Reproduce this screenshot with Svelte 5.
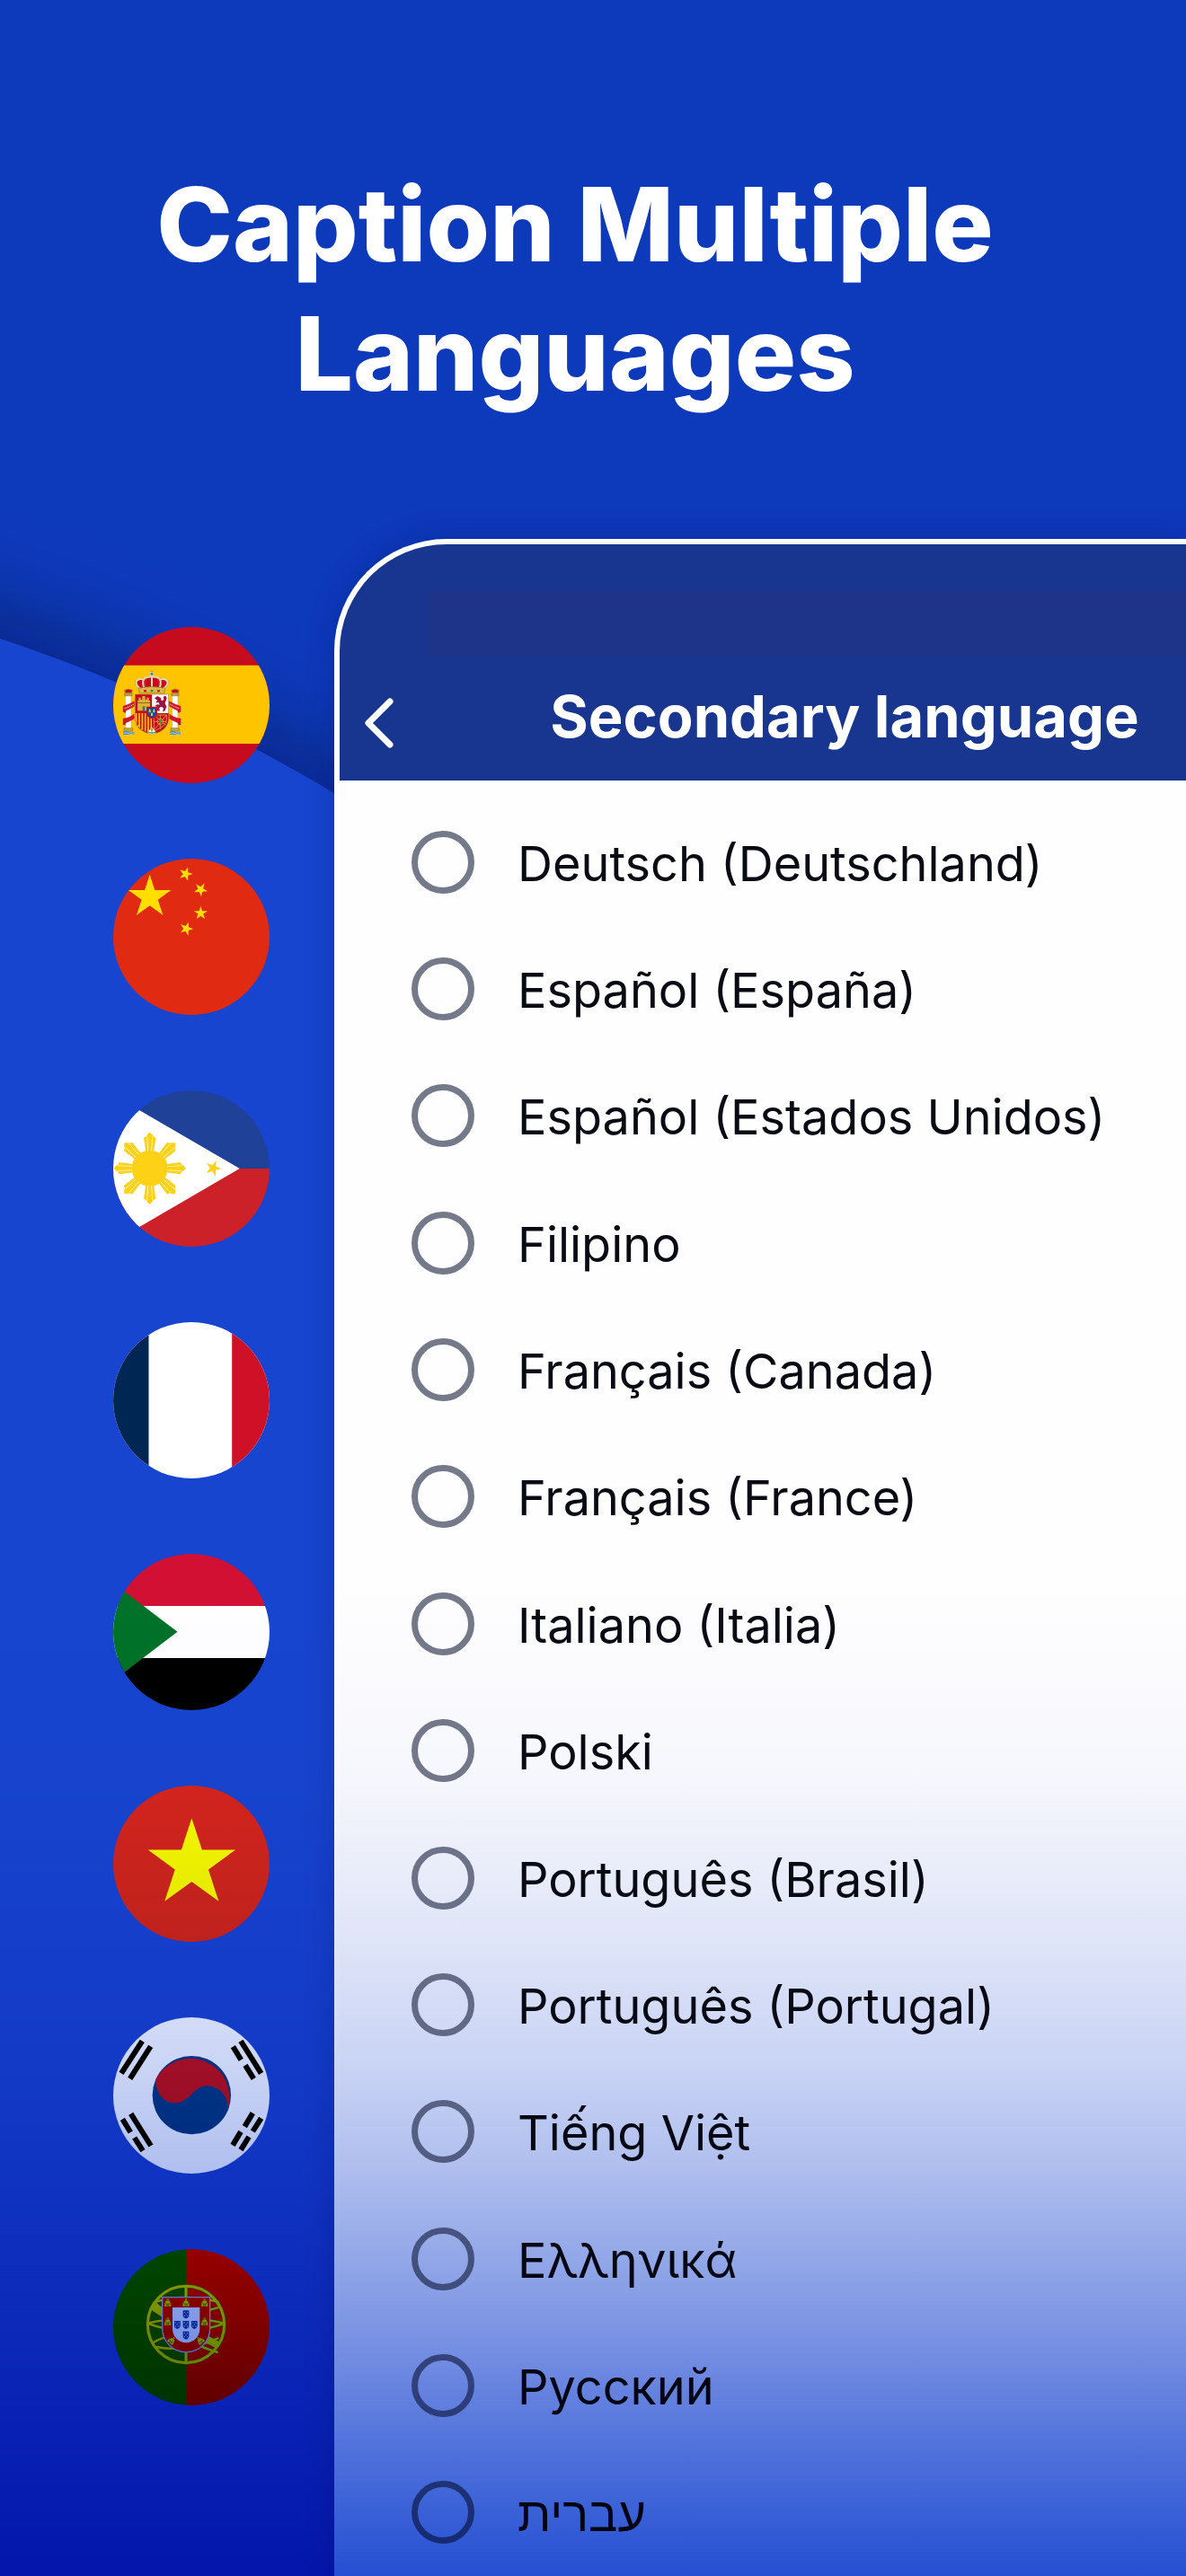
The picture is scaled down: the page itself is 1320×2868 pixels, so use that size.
<script lang="ts">
  const languages = [
    { code: "de-DE", label: "Deutsch (Deutschland)" },
    { code: "es-ES", label: "Español (España)" },
    { code: "es-US", label: "Español (Estados Unidos)" },
    { code: "fil", label: "Filipino" },
    { code: "fr-CA", label: "Français (Canada)" },
    { code: "fr-FR", label: "Français (France)" },
    { code: "it-IT", label: "Italiano (Italia)" },
    { code: "pl", label: "Polski" },
    { code: "pt-BR", label: "Português (Brasil)" },
    { code: "pt-PT", label: "Português (Portugal)" },
    { code: "vi", label: "Tiếng Việt" },
    { code: "el", label: "Ελληνικά" },
    { code: "ru", label: "Русский" },
    { code: "he", label: "עברית" },
  ];

  let selected = $state("");

  // Five-pointed star, `turn` in degrees clockwise from pointing up
  function star(cx: number, cy: number, r: number, turn = 0) {
    return Array.from({ length: 10 }, (_, i) => {
      const a = ((turn - 90 + i * 36) * Math.PI) / 180;
      const d = i % 2 ? r * 0.382 : r;
      return `${(cx + d * Math.cos(a)).toFixed(1)},${(cy + d * Math.sin(a)).toFixed(1)}`;
    }).join(" ");
  }

  const sunRays = [0, 45, 90, 135, 180, 225, 270, 315];
  const castles = [
    [260, 254, 0],
    [321, 254, 0],
    [383, 254, 0],
    [260, 317, 0],
    [383, 317, 0],
    [274, 380, 40],
    [368, 380, -40],
  ];
  const escutcheons = [
    [321, 293],
    [292, 328],
    [321, 328],
    [349, 328],
    [321, 363],
  ];
</script>

<main class="page">
  <svg class="wave" viewBox="0 0 1320 2868" preserveAspectRatio="xMinYMin slice" aria-hidden="true">
    <defs>
      <filter id="wave-shadow" x="-20%" y="-20%" width="140%" height="140%">
        <feOffset dy="-20" />
        <feGaussianBlur stdDeviation="50" />
      </filter>
    </defs>
    <path
      d="M-300 620Q-150 655 0 711Q183 771 372 883Q600 1010 700 1180V3100H-300Z"
      fill="#000820"
      fill-opacity="0.38"
      filter="url(#wave-shadow)"
    />
    <path d="M-300 620Q-150 655 0 711Q183 771 372 883Q600 1010 700 1180V3100H-300Z" fill="#1745cf" />
  </svg>

  <header class="hero">
    <h1>Caption Multiple<br />Languages</h1>
  </header>

  <div class="stage">
    <div class="flags">
      <!-- Spain -->
      <svg class="flag" viewBox="78 80 522 522" role="img" aria-label="España">
        <path fill="#c60b1e" d="M78 80h522v522H78z" />
        <path fill="#ffc400" d="M78 208h522v262H78z" />
        <!-- pillars -->
        <g>
          <path fill="#fff" stroke="#b9b08c" stroke-width="2" d="M119 308h19v112h-19zM275 308h19v112h-19z" />
          <path fill="#c8a53a" stroke="#8a7a3c" stroke-width="2" d="M116 302h25v8h-25zM272 302h25v8h-25zM114 418h29v10h-29zM270 418h29v10h-29z" />
          <path fill="#c60b1e" stroke="#b98c2a" stroke-width="3" d="M118 301l-2-10 13-4 13 4-2 10zM274 301l-2-10 13-4 13 4-2 10z" />
          <path fill="#4f8fc4" d="M111 430q9-5 18 0t19 0v10h-37zM267 430q9-5 18 0t18 0v10h-36z" />
          <path stroke="#dfe8ee" stroke-width="2" fill="none" d="M111 436q9-5 18 0t19 0M267 436q9-5 18 0t18 0" />
          <path fill="#cf142b" stroke="#a30f20" stroke-width="1" d="M111 345q18-6 38-17v16q-18 12-28 15l-3 8-7-4zM111 386q20-2 37-14v15q-18 10-28 13l-2 7h-7zM303 345q-18-6-38-17v16q18 12 28 15l3 8 7-4zM303 386q-20-2-37-14v15q18 10 28 13l2 7h7z" />
          <path stroke="#f3d9a8" stroke-width="4" stroke-dasharray="3 3" fill="none" d="M116 352q15-5 30-14M298 352q-15-5-30-14" />
        </g>
        <!-- crown -->
        <g>
          <path fill="#c60b1e" d="M162 284q-12-22 6-30 20-8 39-8t39 8q18 8 6 30z" />
          <path fill="none" stroke="#e6d9b0" stroke-width="6" d="M168 286q-20-16-12-26 10-10 25-3M246 286q20-16 12-26-10-10-25-3M181 284q-10-32 10-36l16-2 16 2q20 4 10 36M207 246v38" />
          <path fill="none" stroke="#9a8136" stroke-width="1" d="M162 286q-16-16-9-29M252 286q16-16 9-29M187 284q-8-28 8-34M227 284q8-28-8-34" />
          <circle cx="207" cy="237" r="6" fill="#3c7cb8" stroke="#e6d9b0" stroke-width="3" />
          <path stroke="#c8a53a" stroke-width="3" d="M207 223v10M202 228h10" />
          <path fill="#d9b84a" stroke="#8d7428" stroke-width="2" d="M163 284q44-9 88 0l-3 19q-41-6-82 0z" />
          <path fill="#c60b1e" d="M180 291h9v6h-9zM225 291h9v6h-9z" />
          <path fill="#2e8b45" d="M203 290h8v6h-8z" />
        </g>
        <!-- shield -->
        <g>
          <path fill="#c60b1e" stroke="#b98c2a" stroke-width="2" d="M151 305h112v78q0 44-56 56-56-12-56-56z" />
          <path fill="#fff" d="M207 306h55v62h-55z" />
          <path fill="#d9b23a" d="M159 360v-34h4v-10h7v7h5v-12h10v12h5v-7h7v10h4v34z" />
          <path fill="#8a6a1e" d="M159 332h42v3h-42zM176 345h8v15h-8z" />
          <path fill="#2e6ea6" d="M177 348h6v12h-6z" />
          <path fill="#9c1040" d="M216 318l10-7 11 6 2 10 8-3-2-11 8-3 4 8-6 17 5 12-6 14h-7l3-9-6-6-8 4 1 11-9-2 2-12-9-4 8-4 8 1-4-9-9 3 5-9z" />
          <path fill="#ffc400" d="M152 368h55v69q-55-14-55-54z" />
          <path stroke="#c60b1e" stroke-width="5" d="M160 368v40M170 368v52M180 368v60M190 368v65M200 368v68" />
          <path fill="#c60b1e" d="M207 368h55v15q0 44-55 54z" />
          <path fill="none" stroke="#c99a34" stroke-width="3" d="M214 374h42v16q0 22-42 38zM214 374l40 34M256 374l-42 50M235 374v48M214 396h42" />
          <circle cx="235" cy="396" r="10" fill="none" stroke="#c99a34" stroke-width="3" />
          <circle cx="235" cy="396" r="4" fill="#3a9150" />
          <path fill="#fff" d="M192 434l15-20 15 20-15 5z" />
          <path fill="#c99a34" d="M207 416q8 8 0 15-8-7 0-15z" />
          <path stroke="#2e8b45" stroke-width="4" fill="none" d="M194 431q13 6 27 0" />
          <path fill="#0b4ea2" stroke="#c60b1e" stroke-width="4" d="M191 348h32v20q0 12-16 17-16-5-16-17z" />
          <path fill="#e8c94a" d="M197 358l3-5 3 5v8h-6zM211 358l3-5 3 5v8h-6zM204 370l3-5 3 5v7h-6z" />
        </g>
      </svg>

      <!-- China -->
      <svg class="flag" viewBox="78 81 522 522" role="img" aria-label="中国">
        <path fill="#e12a12" d="M78 81h522v522H78z" />
        <g fill="#ffde00">
          <polygon points={star(200, 209, 75)} />
          <polygon points={star(320, 132, 24, 90)} />
          <polygon points={star(370, 184, 24, 176)} />
          <polygon points={star(370, 263, 24)} />
          <polygon points={star(322, 315, 24, 92)} />
        </g>
      </svg>

      <!-- Philippines -->
      <svg class="flag" viewBox="78 75 522 522" role="img" aria-label="Pilipinas">
        <path fill="#1f4298" d="M78 75h522v261H78z" />
        <path fill="#cd2129" d="M78 336h522v261H78z" />
        <path fill="#fff" d="M78 90L500 336 78 582z" />
        <g fill="#fcd116">
          <circle cx="200" cy="335" r="60" />
          {#each sunRays as angle}
            <g transform="rotate({angle} 200 335)">
              <path d="M187 284L180 233 189 228 193 221 200 215 207 221 211 228 220 233 213 284z" />
              <path d="M194 277L191 229M206 277L209 229" stroke="#fff" stroke-width="2" />
            </g>
          {/each}
          <polygon points={star(412, 335, 28, 92)} />
        </g>
      </svg>

      <!-- France -->
      <svg class="flag" viewBox="80 69 520 520" role="img" aria-label="France">
        <path fill="#fff" d="M80 69h520v520H80z" />
        <path fill="#002654" d="M80 69h118v520H80z" />
        <path fill="#ce1126" d="M475 69h125v520H475z" />
      </svg>

      <!-- Sudan -->
      <svg class="flag" viewBox="77 843 521 521" role="img" aria-label="السودان">
        <path fill="#d21034" d="M77 843h521v175H77z" />
        <path fill="#fff" d="M77 1017h521v174H77z" />
        <path fill="#000" d="M77 1190h521v174H77z" />
        <path fill="#007229" d="M77 940L291 1103 77 1266z" />
      </svg>

      <!-- Vietnam -->
      <svg class="flag" viewBox="79 57 520 520" role="img" aria-label="Việt Nam">
        <path fill="#da251d" d="M79 57h520v520H79z" />
        <polygon fill="#ff0" points={star(340, 318, 153)} />
      </svg>

      <!-- South Korea -->
      <svg class="flag" viewBox="78 81 522 522" role="img" aria-label="대한민국">
        <path fill="#fff" d="M78 81h522v522H78z" />
        <circle cx="340" cy="341" r="131" fill="#003c88" />
        <path
          fill="#cb1228"
          d="M219 290C222 340 250 367 285 367C335 367 345 310 391 310C440 312 462 350 461 388A131 131 0 0 0 219 290Z"
        />
        <g stroke="#000" stroke-width="18">
          <path d="M175 160L105 268M203 178L134 286" />
          <path d="M137 403L204 510M109 421L136 465M149 483L177 527" />
          <path d="M478 179L505 223M519 241L547 286M504 160L572 268" />
          <path d="M544 401L517 446M504 463L477 508M572 418L544 462M531 480L504 524" />
        </g>
      </svg>

      <!-- Portugal -->
      <svg class="flag" viewBox="78 75 522 522" role="img" aria-label="Portugal">
        <path fill="#060" d="M78 75h244v522H78z" />
        <path fill="#f00" d="M322 75h278v522H322z" />
        <!-- armillary sphere: dark outline under the yellow bands -->
        {#each [{ color: "#5a5a00", extra: 3 }, { color: "#e8f000", extra: 0 }] as pass}
          <g fill="none" stroke={pass.color}>
            <circle cx="321" cy="327" r="128" stroke-width={9 + pass.extra} />
            <path stroke-width={9 + pass.extra} d="M321 197v260" />
            <path stroke-width={7 + pass.extra} d="M192 323q129 50 258 0M192 323q129-30 258 0" />
            <path stroke-width={7 + pass.extra} d="M216 252q105-30 214 0M216 250q50 70 214 20" />
            <path stroke-width={7 + pass.extra} d="M208 390q60-40 120-10t100 40M222 402q100 20 208-30" />
            <path stroke-width={24 + pass.extra} d="M206 264Q300 330 428 396" />
          </g>
        {/each}
        <path fill="#f00" stroke="#b9bde0" stroke-width="4" d="M242 236h159v104a79 79 0 0 1-159 0z" />
        <path fill="#fff" d="M276 270h91v72a45 45 0 0 1-91 0z" />
        {#each castles as [x, y, turn]}
          <g transform="translate({x} {y}) rotate({turn})">
            <path fill="#f2f200" d="M-11 12V0h4v-6h4v-7h6v7h4v6h4v12z" />
            <path stroke="#555500" stroke-width="2" fill="none" d="M-11 4h22M0 -12v6M-3 12v-5h6v5" />
          </g>
        {/each}
        {#each escutcheons as [x, y]}
          <g transform="translate({x} {y})">
            <path fill="#003da6" d="M-10-13h20V3q0 8-10 11-10-3-10-11z" />
            <g fill="#fff">
              <circle cx="-5" cy="-7" r="2" />
              <circle cx="5" cy="-7" r="2" />
              <circle cx="0" cy="-1" r="2" />
              <circle cx="-5" cy="5" r="2" />
              <circle cx="5" cy="5" r="2" />
            </g>
          </g>
        {/each}
      </svg>
    </div>

    <section class="phone">
      <header class="topbar">
        <div class="status"></div>
        <div class="nav">
          <button class="back" type="button" aria-label="Back">
            <svg viewBox="0 0 32 56" aria-hidden="true">
              <path d="M28 4L4 28l24 24" />
            </svg>
          </button>
          <h2>Secondary language</h2>
        </div>
      </header>

      <div class="list" role="radiogroup" aria-label="Secondary language">
        {#each languages as { code, label }}
          <label class="row">
            <input type="radio" name="language" value={code} bind:group={selected} />
            <span dir="auto">{label}</span>
          </label>
        {/each}
      </div>
    </section>
  </div>
</main>

<style>
  :global(body) {
    margin: 0;
    background: #0d39bb;
  }

  .page {
    position: relative;
    display: flex;
    flex-direction: column;
    min-height: 100vh;
    overflow: hidden;
    isolation: isolate;
    background: #0d39bb;
    font-family: Inter, "Noto Sans", "Liberation Sans", sans-serif;
  }

  /* Fade to deep blue over everything at the bottom */
  .page::after {
    content: "";
    position: absolute;
    inset: 0;
    z-index: 2;
    pointer-events: none;
    mix-blend-mode: multiply;
    background: linear-gradient(
      to bottom,
      #fff 61%,
      #f7f8fd 69%,
      #e1e7f9 75%,
      #cbd5f5 80%,
      #b1c0ef 84%,
      #8099e5 90%,
      #5072dc 95%,
      #244fd3 100%
    );
  }

  .wave {
    position: absolute;
    inset: 0;
    z-index: -1;
    width: 100%;
    height: 100%;
  }

  /* ── Hero ────────────────────────────────────── */
  .hero {
    box-sizing: border-box;
    height: 600px;
    padding: 178px 40px 0 0;
    text-align: center;
  }

  h1 {
    margin: 0;
    font-size: 114px;
    line-height: 144px;
    font-weight: 800;
    color: #fff;
  }

  /* ── Flags and phone ─────────────────────────── */
  .stage {
    flex: 1;
    display: grid;
    grid-template-columns: 372px 1fr;
  }

  .flags {
    display: flex;
    flex-direction: column;
    align-items: center;
    gap: 84px;
    padding: 98px 0 0 54px;
  }

  .flag {
    flex-shrink: 0;
    width: 174px;
    height: 174px;
    border-radius: 50%;
  }

  .phone {
    display: flex;
    flex-direction: column;
    overflow: hidden;
    border: 6px solid #fff;
    border-width: 6px 0 0 6px;
    border-top-left-radius: 125px;
    background: #fefefe;
    box-shadow: 0 0 32px rgba(4, 16, 90, 0.25);
  }

  .topbar {
    padding-top: 51px;
    background: #18368f;
  }

  .status {
    height: 73px;
    margin-left: 96px;
    background: #1e3488;
  }

  .nav {
    display: flex;
    align-items: center;
    height: 139px;
    padding-left: 18px;
  }

  .back {
    display: flex;
    align-items: center;
    justify-content: center;
    width: 52px;
    height: 72px;
    margin: 10px 112px 0 0;
    padding: 0;
    border: 0;
    background: none;
    cursor: pointer;
  }

  .back svg {
    width: 32px;
    height: 56px;
    fill: none;
    stroke: #fff;
    stroke-width: 7;
    stroke-linecap: round;
    stroke-linejoin: round;
  }

  h2 {
    flex: 1;
    margin: 0;
    padding-bottom: 4px;
    font-size: 65px;
    line-height: 80px;
    font-weight: 700;
    text-align: center;
    white-space: nowrap;
    color: #fff;
  }

  /* ── Language list ───────────────────────────── */
  .list {
    flex: 1;
    display: flex;
    flex-direction: column;
    padding: 20px 0 0 80px;
  }

  .row {
    flex: 1;
    display: flex;
    align-items: center;
    gap: 48px;
    font-size: 54px;
    line-height: 72px;
    white-space: nowrap;
    color: #080a14;
    cursor: pointer;
  }

  .row span {
    padding-top: 4px;
  }

  .row input {
    appearance: none;
    box-sizing: border-box;
    flex-shrink: 0;
    width: 70px;
    height: 70px;
    margin: 0;
    border: 7px solid #757a8a;
    border-radius: 50%;
    cursor: pointer;
  }

  .row input:checked {
    background: radial-gradient(#1745cf 50%, transparent 55%);
  }
</style>
